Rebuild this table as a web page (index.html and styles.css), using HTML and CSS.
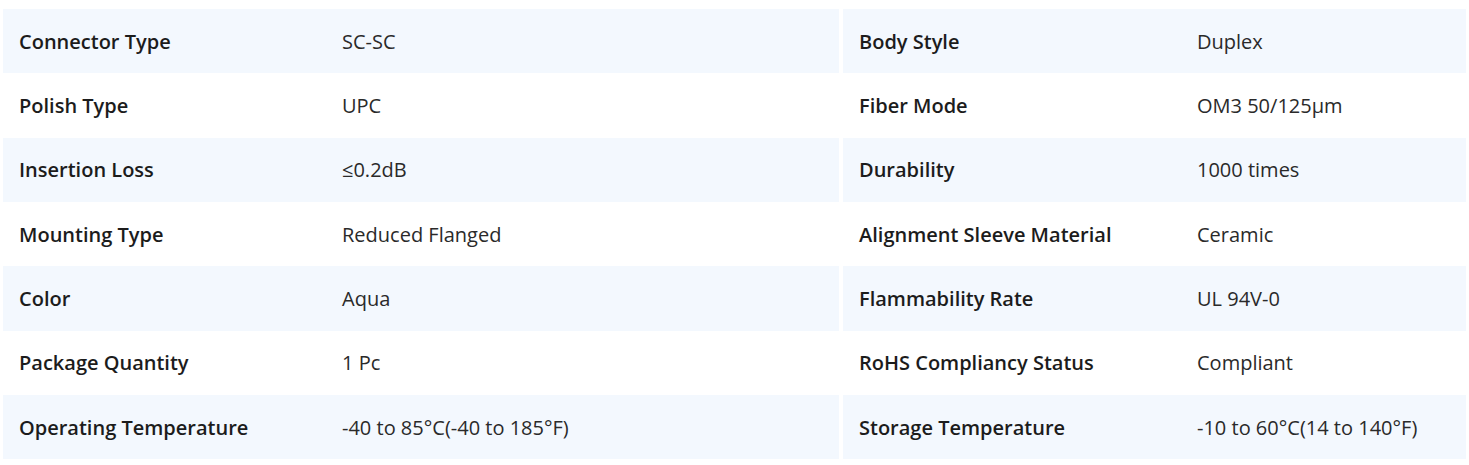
FILE: index.html
```html
<!DOCTYPE html>
<html lang="en">
<head>
<meta charset="utf-8">
<title>Specifications</title>
<link rel="stylesheet" href="styles.css">
</head>
<body>
<div class="specs">
  <div class="row shaded">
    <div class="pair left"><div class="label">Connector Type</div><div class="value">SC-SC</div></div>
    <div class="pair right"><div class="label">Body Style</div><div class="value">Duplex</div></div>
  </div>
  <div class="row">
    <div class="pair left"><div class="label">Polish Type</div><div class="value">UPC</div></div>
    <div class="pair right"><div class="label">Fiber Mode</div><div class="value">OM3 50/125μm</div></div>
  </div>
  <div class="row shaded">
    <div class="pair left"><div class="label">Insertion Loss</div><div class="value">≤0.2dB</div></div>
    <div class="pair right"><div class="label">Durability</div><div class="value">1000 times</div></div>
  </div>
  <div class="row">
    <div class="pair left"><div class="label">Mounting Type</div><div class="value">Reduced Flanged</div></div>
    <div class="pair right"><div class="label">Alignment Sleeve Material</div><div class="value">Ceramic</div></div>
  </div>
  <div class="row shaded">
    <div class="pair left"><div class="label">Color</div><div class="value">Aqua</div></div>
    <div class="pair right"><div class="label">Flammability Rate</div><div class="value">UL 94V-0</div></div>
  </div>
  <div class="row">
    <div class="pair left"><div class="label">Package Quantity</div><div class="value">1 Pc</div></div>
    <div class="pair right"><div class="label">RoHS Compliancy Status</div><div class="value">Compliant</div></div>
  </div>
  <div class="row shaded">
    <div class="pair left"><div class="label">Operating Temperature</div><div class="value">-40 to 85°C(-40 to 185°F)</div></div>
    <div class="pair right"><div class="label">Storage Temperature</div><div class="value">-10 to 60°C(14 to 140°F)</div></div>
  </div>
</div>
</body>
</html>
```
FILE: styles.css
```css
html, body {
  margin: 0;
  padding: 0;
  background: #ffffff;
}

body {
  font-family: "Open Sans", "Liberation Sans", sans-serif;
  font-size: 20px;
  color: #222222;
}

.specs {
  padding: 9px 3px;
  display: flex;
  flex-direction: column;
}

.row {
  display: flex;
  gap: 4px;
  height: 64.33px;
}

.pair {
  display: flex;
  align-items: center;
}

.row.shaded .pair {
  background: #f3f8fe;
}

.pair.left {
  width: 836px;
}

.pair.right {
  width: 623px;
}

.label {
  font-weight: 600;
  color: #1c1c1c;
  padding-left: 16px;
  box-sizing: border-box;
}

.left .label {
  width: 323px;
}

.right .label {
  width: 338px;
}

.value {
  font-weight: 400;
  color: #2a2a2a;
  padding-left: 16px;
}
```
